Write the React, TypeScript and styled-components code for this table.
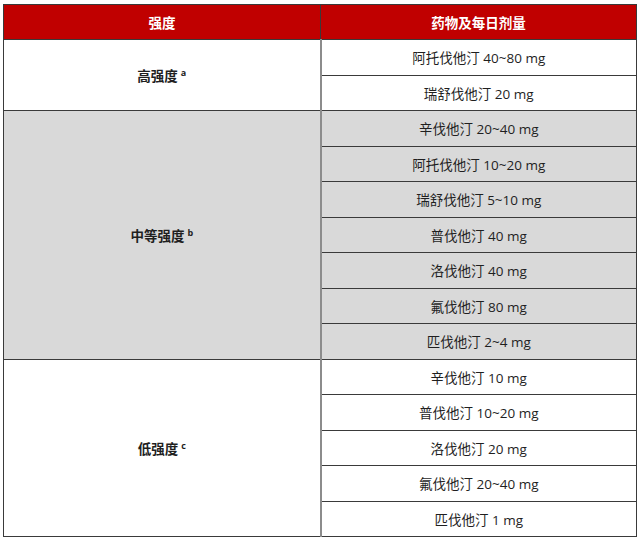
import React from "react";
import styled, { createGlobalStyle } from "styled-components";

const GlobalStyle = createGlobalStyle`
  body {
    margin: 0;
    background: #ffffff;
    font-family: "Open Sans", "Noto Sans CJK SC", sans-serif;
  }
`;

const Page = styled.div`
  padding: 4px 4px 0 3px;
`;

const Table = styled.table`
  width: 634px;
  border-collapse: collapse;
  table-layout: fixed;
  font-size: 13.5px;
  color: #1f1f1f;
  border: 1.5px solid #3a3a3a;
`;

const HeadCell = styled.th`
  background: #c00000;
  color: #ffffff;
  font-weight: bold;
  height: 34px;
  padding: 0;
  text-align: center;
  border: 1px solid #3a3a3a;
`;

const GroupCell = styled.td<{ $shaded?: boolean }>`
  background: ${(p) => (p.$shaded ? "#d9d9d9" : "#ffffff")};
  font-weight: bold;
  text-align: center;
  vertical-align: middle;
  padding: 0;
  border: 1px solid #3a3a3a;
  border-right: 2px solid #8c8c8c;
`;

const DrugCell = styled.td<{ $shaded?: boolean }>`
  background: ${(p) => (p.$shaded ? "#d9d9d9" : "#ffffff")};
  text-align: center;
  vertical-align: middle;
  height: 34.5px;
  padding: 0;
  border: 1px solid #3a3a3a;
`;

const Note = styled.sup`
  font-size: 9px;
  margin-left: 3px;
  vertical-align: 5px;
`;

type Group = {
  name: string;
  note: string;
  shaded: boolean;
  drugs: string[];
};

const groups: Group[] = [
  {
    name: "高强度",
    note: "a",
    shaded: false,
    drugs: ["阿托伐他汀 40~80 mg", "瑞舒伐他汀 20 mg"],
  },
  {
    name: "中等强度",
    note: "b",
    shaded: true,
    drugs: [
      "辛伐他汀 20~40 mg",
      "阿托伐他汀 10~20 mg",
      "瑞舒伐他汀 5~10 mg",
      "普伐他汀 40 mg",
      "洛伐他汀 40 mg",
      "氟伐他汀 80 mg",
      "匹伐他汀 2~4 mg",
    ],
  },
  {
    name: "低强度",
    note: "c",
    shaded: false,
    drugs: [
      "辛伐他汀 10 mg",
      "普伐他汀 10~20 mg",
      "洛伐他汀 20 mg",
      "氟伐他汀 20~40 mg",
      "匹伐他汀 1 mg",
    ],
  },
];

export default function App() {
  return (
    <Page>
      <GlobalStyle />
      <Table>
        <colgroup>
          <col style={{ width: 317 }} />
          <col />
        </colgroup>
        <thead>
          <tr>
            <HeadCell>强度</HeadCell>
            <HeadCell>药物及每日剂量</HeadCell>
          </tr>
        </thead>
        <tbody>
          {groups.map((g) =>
            g.drugs.map((d, i) => (
              <tr key={g.name + d}>
                {i === 0 && (
                  <GroupCell rowSpan={g.drugs.length} $shaded={g.shaded}>
                    {g.name}
                    <Note>{g.note}</Note>
                  </GroupCell>
                )}
                <DrugCell $shaded={g.shaded}>{d}</DrugCell>
              </tr>
            ))
          )}
        </tbody>
      </Table>
    </Page>
  );
}
